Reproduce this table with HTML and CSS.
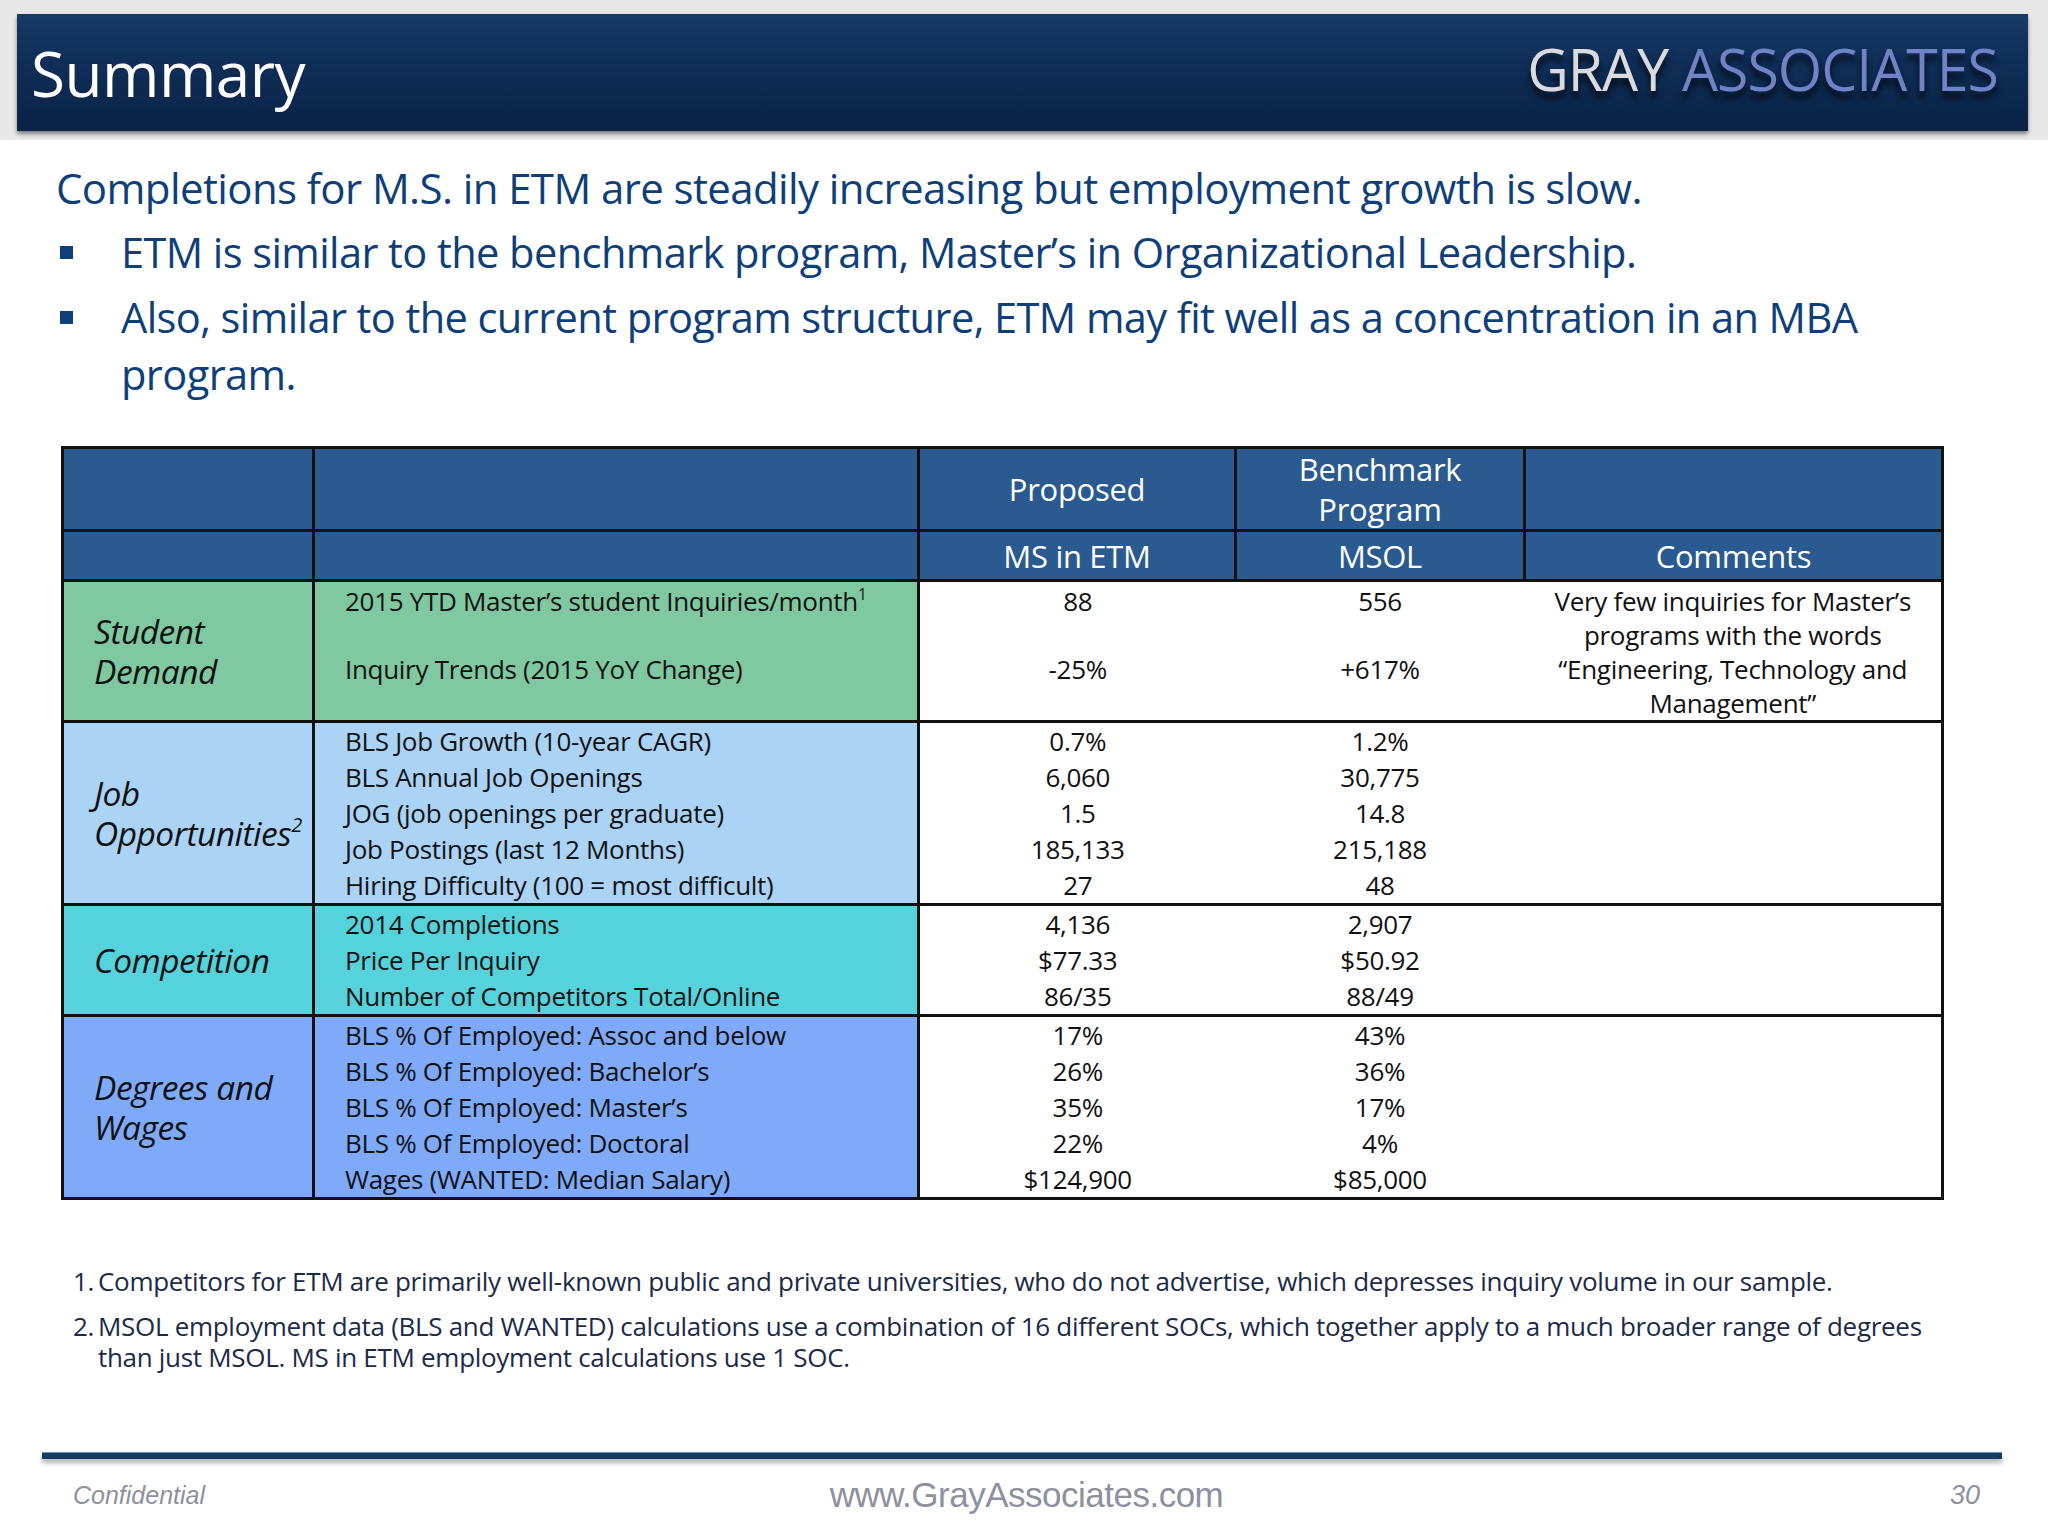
FILE: index.html
```html
<!DOCTYPE html>
<html>
<head>
<meta charset="utf-8">
<link rel="stylesheet" href="styles.css">
</head>
<body>
<div class="slide">
  <header class="top">
    <div class="bar">
      <h1 class="title">Summary</h1>
      <div class="logo"><span class="gray">GRAY</span> <span class="assoc">ASSOCIATES</span></div>
    </div>
  </header>

  <section class="intro">
    <p class="lead">Completions for M.S. in ETM are steadily increasing but employment growth is slow.</p>
    <ul class="bullets">
      <li>ETM is similar to the benchmark program, Master’s in Organizational Leadership.</li>
      <li>Also, similar to the current program structure, ETM may fit well as a concentration in an MBA<br>program.</li>
    </ul>
  </section>

  <table class="grid">
    <colgroup>
      <col class="c1"><col class="c2"><col class="c3"><col class="c4"><col class="c5">
    </colgroup>
    <thead>
      <tr class="h1row">
        <th></th><th></th><th>Proposed</th><th>Benchmark<br>Program</th><th></th>
      </tr>
      <tr class="h2row">
        <th></th><th></th><th>MS in ETM</th><th>MSOL</th><th>Comments</th>
      </tr>
    </thead>
    <tbody>
      <tr class="grp demand">
        <td class="label">Student<br>Demand</td>
        <td class="metric"><div>2015 YTD Master’s student Inquiries/month<sup>1</sup></div><div>&nbsp;</div><div>Inquiry Trends (2015 YoY Change)</div><div>&nbsp;</div></td>
        <td class="v1"><div>88</div><div>&nbsp;</div><div>-25%</div><div>&nbsp;</div></td>
        <td class="v2"><div>556</div><div>&nbsp;</div><div>+617%</div><div>&nbsp;</div></td>
        <td class="comm"><div>Very few inquiries for Master’s</div><div>programs with the words</div><div>“Engineering, Technology and</div><div>Management”</div></td>
      </tr>
      <tr class="grp jobs">
        <td class="label">Job<br>Opportunities<sup>2</sup></td>
        <td class="metric"><div>BLS Job Growth (10-year CAGR)</div><div>BLS Annual Job Openings</div><div>JOG (job openings per graduate)</div><div>Job Postings (last 12 Months)</div><div>Hiring Difficulty (100 = most difficult)</div></td>
        <td class="v1"><div>0.7%</div><div>6,060</div><div>1.5</div><div>185,133</div><div>27</div></td>
        <td class="v2"><div>1.2%</div><div>30,775</div><div>14.8</div><div>215,188</div><div>48</div></td>
        <td class="comm"></td>
      </tr>
      <tr class="grp comp">
        <td class="label">Competition</td>
        <td class="metric"><div>2014 Completions</div><div>Price Per Inquiry</div><div>Number of Competitors Total/Online</div></td>
        <td class="v1"><div>4,136</div><div>$77.33</div><div>86/35</div></td>
        <td class="v2"><div>2,907</div><div>$50.92</div><div>88/49</div></td>
        <td class="comm"></td>
      </tr>
      <tr class="grp wages">
        <td class="label">Degrees and<br>Wages</td>
        <td class="metric"><div>BLS % Of Employed: Assoc and below</div><div>BLS % Of Employed: Bachelor’s</div><div>BLS % Of Employed: Master’s</div><div>BLS % Of Employed: Doctoral</div><div>Wages (WANTED: Median Salary)</div></td>
        <td class="v1"><div>17%</div><div>26%</div><div>35%</div><div>22%</div><div>$124,900</div></td>
        <td class="v2"><div>43%</div><div>36%</div><div>17%</div><div>4%</div><div>$85,000</div></td>
        <td class="comm"></td>
      </tr>
    </tbody>
  </table>

  <ol class="notes">
    <li><span class="num">1.</span><span class="txt">Competitors for ETM are primarily well-known public and private universities, who do not advertise, which depresses inquiry volume in our sample.</span></li>
    <li><span class="num">2.</span><span class="txt">MSOL employment data (BLS and WANTED) calculations use a combination of 16 different SOCs, which together apply to a much broader range of degrees<br>than just MSOL. MS in ETM employment calculations use 1 SOC.</span></li>
  </ol>

  <footer class="foot">
    <div class="rule"></div>
    <div class="footrow">
      <span class="conf">Confidential</span>
      <span class="url">www.GrayAssociates.com</span>
      <span class="page">30</span>
    </div>
  </footer>
</div>
</body>
</html>
```

FILE: styles.css
```css
html, body {
  margin: 0;
  padding: 0;
  background: #ffffff;
}

.slide {
  width: 2048px;
  height: 1536px;
  overflow: hidden;
  position: relative;
  font-family: "Open Sans", "Noto Sans", sans-serif;
  background: #ffffff;
}

/* ---------- header ---------- */
.top {
  background: #e8e8e8;
  padding: 14px 20px 9px 17px;
}

.bar {
  height: 117px;
  display: flex;
  align-items: center;
  justify-content: space-between;
  padding: 0 30px 0 14px;
  background: linear-gradient(180deg, #173a66 0%, #0f2d56 45%, #0a2346 100%);
  box-shadow: 0 3px 4px rgba(0, 0, 0, 0.45);
}

.title {
  margin: 0;
  font-weight: 400;
  font-size: 62px;
  line-height: 1;
  color: #ffffff;
  letter-spacing: -0.5px;
}

.logo {
  font-size: 58px;
  line-height: 1;
  white-space: nowrap;
  letter-spacing: -1px;
  transform: translateY(-4px) scaleX(0.985);
  transform-origin: right center;
  text-shadow: 0 7px 6px rgba(0, 0, 0, 0.7);
}

.logo .gray { color: #d9dbe0; }
.logo .assoc { color: #6f83c6; }

/* ---------- intro ---------- */
.intro {
  color: #0f3f7a;
  padding-left: 56px;
}

.lead {
  margin: 19px 0 0 0;
  font-size: 42px;
  line-height: 57px;
  letter-spacing: -0.6px;
}

.bullets {
  list-style: none;
  margin: 8px 0 0 0;
  padding: 0;
}

.bullets li {
  position: relative;
  padding-left: 65px;
  font-size: 41.6px;
  line-height: 57px;
  letter-spacing: -0.6px;
  margin-bottom: 8px;
}

.bullets li::before {
  content: "";
  position: absolute;
  left: 4px;
  top: 22px;
  width: 13px;
  height: 13px;
  background: #0f3f7a;
}

/* ---------- table ---------- */
.grid {
  margin: 43px 0 0 61px;
  width: 1880px;
  table-layout: fixed;
  border-collapse: collapse;
  font-size: 26px;
  color: #111111;
  letter-spacing: -0.3px;
}

.c1 { width: 251px; }
.c2 { width: 605px; }
.c3 { width: 317px; }
.c4 { width: 289px; }
.c5 { width: 418px; }

.grid th {
  background: #2a5a90;
  color: #ffffff;
  font-weight: 400;
  font-size: 31px;
  border: 3px solid #111111;
  padding: 0;
  text-align: center;
  letter-spacing: -0.3px;
}

.h1row th {
  height: 76px;
  line-height: 40px;
}

.h2row th {
  height: 47px;
  line-height: 40px;
}

.grid td {
  padding: 0;
  vertical-align: top;
  border-top: 3px solid #111111;
  border-bottom: 3px solid #111111;
}

.grid td.label {
  border-left: 3px solid #111111;
  border-right: 3px solid #111111;
  vertical-align: middle;
  font-style: italic;
  font-size: 33.5px;
  line-height: 40px;
  padding-left: 30px;
  letter-spacing: -0.5px;
  white-space: nowrap;
}

.grid td.metric {
  border-left: 3px solid #111111;
  border-right: 3px solid #111111;
  padding-left: 30px;
  white-space: nowrap;
}

.grid td.v1,
.grid td.v2 {
  text-align: center;
  background: #ffffff;
}

.grid td.v1 { border-left: 3px solid #111111; }

.grid td.comm {
  text-align: center;
  background: #ffffff;
  border-right: 3px solid #111111;
}

.grp td { line-height: 36px; }

.demand td { line-height: 34px; }
.demand td.metric,
.demand td.v1,
.demand td.v2,
.demand td.comm { padding-top: 2px; }
.demand td.label { line-height: 40px; }

.demand td.label,
.demand td.metric { background: #80c9a0; }
.jobs td.label,
.jobs td.metric { background: #abd3f6; }
.comp td.label,
.comp td.metric { background: #55d2dc; }
.wages td.label,
.wages td.metric { background: #7eaaf9; }

.demand { height: 139px; }
.jobs { height: 182px; }
.comp { height: 110px; }
.wages { height: 180px; }

.grid sup {
  font-size: 0.6em;
  line-height: 0;
  vertical-align: 0.7em;
}

.grid td.label sup {
  font-size: 0.6em;
}

/* ---------- footnotes ---------- */
.notes {
  list-style: none;
  margin: 66px 0 0 0;
  padding: 0 0 0 73px;
  color: #1b2a48;
  font-size: 26px;
  line-height: 31px;
  letter-spacing: -0.3px;
}

.notes li {
  display: flex;
  margin-bottom: 14px;
}

.notes .num {
  width: 25px;
  flex: none;
}

/* ---------- footer ---------- */
.foot {
  margin-top: 79px;
  padding: 0 46px 0 42px;
}

.rule {
  height: 6px;
  background: #153a66;
  border-top: 1px solid #6f90b8;
  box-shadow: 0 4px 5px rgba(0, 0, 0, 0.3);
}

.footrow {
  display: flex;
  justify-content: space-between;
  align-items: center;
  margin-top: 16px;
  padding: 0 22px 0 31px;
  color: #8d909e;
  font-family: "Liberation Sans", Arial, sans-serif;
}

.conf {
  font-style: italic;
  font-size: 25px;
  width: 300px;
}

.url {
  font-size: 35px;
  letter-spacing: -0.5px;
}

.page {
  font-style: italic;
  font-size: 27px;
  width: 300px;
  text-align: right;
}
```
